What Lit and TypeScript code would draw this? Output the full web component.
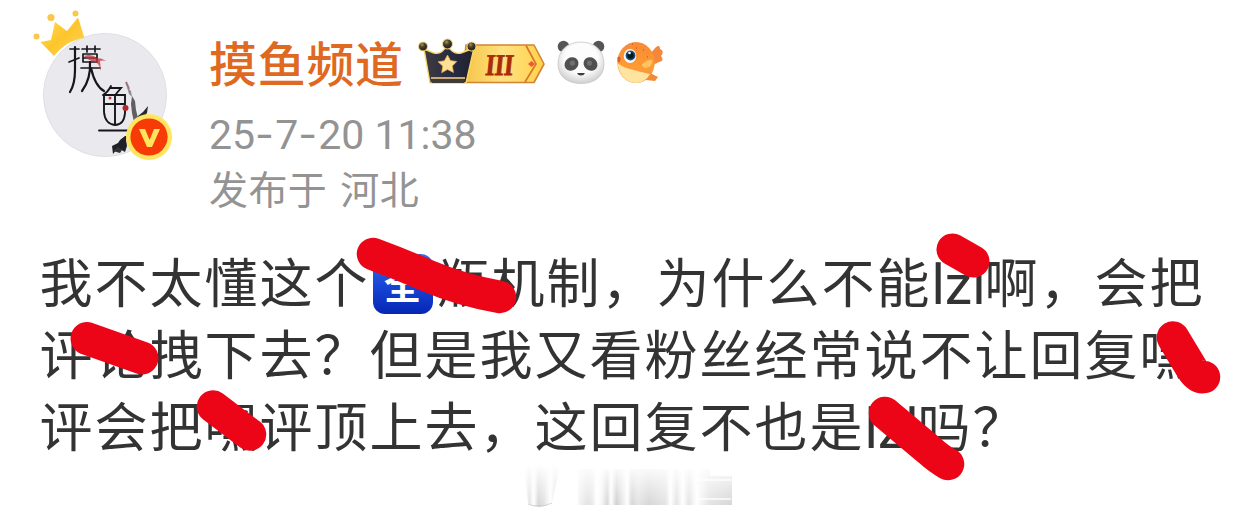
import { LitElement, html, css, svg } from 'lit';
import { customElement } from 'lit/decorators.js';

/**
 * Round author picture with the crown and the verified badge
 */
@customElement('post-avatar')
export class PostAvatar extends LitElement {
  static styles = css`
    :host {
      display: block;
      width: 170px;
      height: 170px;
    }

    svg {
      display: block;
    }
  `;

  render() {
    return html`
      <svg width="170" height="170" viewBox="20 0 170 170">
        <defs>
          <linearGradient id="crown" x1="0" y1="0" x2="1" y2="1">
            <stop offset="0" stop-color="#ffdc55" />
            <stop offset="0.5" stop-color="#fdc52c" />
            <stop offset="1" stop-color="#ffd75c" />
          </linearGradient>
        </defs>
        <circle cx="105" cy="95" r="61.6" fill="#eaeaee" stroke="#dcdce0" stroke-width="0.8" />
        <!-- calligraphy: upper character -->
        <g fill="none" stroke="#17171b" stroke-width="1.7" stroke-linecap="round">
          <path d="M70 49h9M69 62l10-4M82 49h18M87 46v6M95 46v6M83 54v8M97 54v8M83 54h14M83 58h14M83 62h14M81 68h19" />
          <path d="M75 47V70Q75 84 70 92" stroke-width="2.2" />
          <path d="M90 62Q91 79 82 91M91 68Q95 86 104 91" stroke-width="2.2" />
        </g>
        <path d="M84 56q7-3 13 2q5 0 9 3q-4-1-6 0l1 10q-2-8-6-9q-6-1-11-6z" fill="#c3333a" opacity="0.75" />
        <!-- calligraphy: lower character -->
        <g fill="none" stroke="#17171b" stroke-width="1.9" stroke-linecap="round">
          <path d="M111 86Q108 92 103 95M111 88h10L116 94M104 95h21V113Q124 125 115 125Q105 124 104 112ZM105 104h20M115 95v29" />
          <path d="M99 130.5h31" />
        </g>
        <circle cx="110" cy="98" r="1.5" fill="#c8373d" />
        <circle cx="125.5" cy="108" r="3" fill="#b5262c" />
        <!-- ink fish -->
        <path d="M126 82l3 7" stroke="#9f7472" stroke-width="2" />
        <path d="M127 87l4 4 1 6-3-3z" fill="#8d8c91" />
        <path d="M132 96l3 5 1 9 2 8-4 4-2-9-1-9z" fill="#5f5e64" />
        <path d="M138 116l5-4 5-6-1 7-5 6-6 3z" fill="#28282d" />
        <path d="M130 136l-4 3 1 7-2 6-7-4-5 6-1-8 6-3 2-3 5-4z" fill="#202126" />
        <path d="M113 151l5-4 4 3-2 3z" fill="#303138" />
        <!-- crown -->
        <path d="M40.5 42L51 40L55 22L67 31L78 17.5L84.5 38Q67 40 54 56Z" fill="url(#crown)" />
        <circle cx="36.5" cy="36.5" r="3" fill="#fbc64c" />
        <circle cx="51" cy="17.5" r="3.6" fill="#fbc64c" />
        <circle cx="75.5" cy="13.5" r="3" fill="#fbc64c" />
        <!-- verified -->
        <circle cx="149" cy="137" r="23" fill="#ffe661" />
        <circle cx="149" cy="137" r="18.6" fill="#f63b06" />
        <path d="M139 129h6l4.6 11 4.4-11h6l-8 18h-5z" fill="#ffe45e" />
      </svg>
    `;
  }
}

/**
 * Badges that follow the author name
 */
@customElement('name-badges')
export class NameBadges extends LitElement {
  static styles = css`
    :host {
      display: block;
      margin-top: -2px;
    }

    svg {
      display: block;
    }

    .level {
      font-family: 'Liberation Serif', serif;
      font-weight: 700;
      font-size: 30px;
      fill: #a92b08;
      stroke: #a92b08;
      stroke-width: 0.8px;
    }
  `;

  render() {
    return html`
      <svg width="250" height="52" viewBox="416 36 250 52">
        <defs>
          <linearGradient id="gold" x1="0" y1="0" x2="1" y2="0">
            <stop offset="0" stop-color="#f6c343" />
            <stop offset="0.5" stop-color="#ffe181" />
            <stop offset="1" stop-color="#ffd24a" />
          </linearGradient>
          <linearGradient id="cap" x1="0" y1="0" x2="1" y2="0">
            <stop offset="0" stop-color="#413b3e" />
            <stop offset="0.5" stop-color="#292c46" />
            <stop offset="1" stop-color="#20212c" />
          </linearGradient>
          <radialGradient id="bead" cx="0.4" cy="0.3">
            <stop offset="0" stop-color="#aa9664" />
            <stop offset="0.5" stop-color="#51472f" />
            <stop offset="1" stop-color="#2d2922" />
          </radialGradient>
          <radialGradient id="fur" cx="0.5" cy="0.4" r="0.6">
            <stop offset="0.6" stop-color="#fcfcfc" />
            <stop offset="1" stop-color="#cfcfcf" />
          </radialGradient>
          <linearGradient id="fish" x1="0" y1="0" x2="0" y2="1">
            <stop offset="0" stop-color="#f88935" />
            <stop offset="0.6" stop-color="#ff9b32" />
            <stop offset="1" stop-color="#f1943f" />
          </linearGradient>
        </defs>

        <path d="M466 45H534L544 64L534 82.5H462Z" fill="url(#gold)" stroke="#d28434" stroke-width="1.6" stroke-linejoin="round" />
        <path d="M526 45.5L536 64L525 82" fill="none" stroke="#d9762b" stroke-width="1.7" />
        <path d="M528 64l3.5-3 3.5 3-3.5 3z" fill="#f0583a" />
        <text class="level" x="485" y="74.6" textLength="28" lengthAdjust="spacingAndGlyphs" transform="translate(7.5 0) skewX(-6)">III</text>
        <path d="M424 49L434 53Q442 55 447 45Q453 55 461 53L474 48L466 83H430Z" fill="url(#cap)" stroke="#f7d76b" stroke-width="1.4" stroke-linejoin="round" />
        <path d="M430.5 77.5h35l-1.5 5.5h-32z" fill="#403a35" />
        <path d="M431 78h34" stroke="#c6aa79" stroke-width="1.8" />
        <circle cx="423" cy="46.5" r="4.5" fill="url(#bead)" stroke="#f5de89" />
        <circle cx="447.5" cy="44" r="5" fill="url(#bead)" stroke="#f5de89" />
        <circle cx="471.5" cy="46.5" r="4.5" fill="url(#bead)" stroke="#f5de89" />
        <path d="M447.5 55l3 5.6 6.3 .9-4.5 4.500 1.2 6.500-6-3-5.800 3.200 1-6.600-4.700-4.400 6.400-.9z" fill="#ffe193" stroke="#e6ad42" stroke-width="0.7" />

        <!-- panda -->
        <circle cx="563.5" cy="46.5" r="5.8" fill="#555557" />
        <circle cx="598.5" cy="46.5" r="5.8" fill="#555557" />
        <path d="M581 42C595 42 604 51 604 64C604 77 594 83.5 581 83.5S558 77 558 64C558 51 567 42 581 42Z" fill="url(#fur)" stroke="#c9c9c9" stroke-width="0.8" />
        <ellipse cx="571.5" cy="64" rx="7.2" ry="6.5" fill="#505052" transform="rotate(-35 571.5 64)" />
        <ellipse cx="590.5" cy="64" rx="7.2" ry="6.5" fill="#505052" transform="rotate(35 590.5 64)" />
        <circle cx="572.5" cy="63" r="2.6" fill="#707073" />
        <circle cx="589.5" cy="63" r="2.6" fill="#707073" />
        <path d="M577 73h8q-1 2.5-4 2.5t-4-2.5z" fill="#3d3d3e" />

        <!-- goldfish -->
        <path d="M650 54L656 47Q660 44 660 49Q665 51 661 56Q665 61 659 62L651 66Z" fill="#f5873a" />
        <path d="M648 72l10 5-3 4-9-1z" fill="#ef8b39" />
        <ellipse cx="636" cy="62.5" rx="18.7" ry="20.5" fill="url(#fish)" />
        <path d="M617.5 63Q623 68 634 70Q645 73 650 74Q645 83 635 83Q620 81 617.5 63Z" fill="#ffe3a1" />
        <path d="M641 65Q648 58 653 60Q653 67 645 69Z" fill="#ffc45f" stroke="#f49732" stroke-width="0.7" />
        <path d="M636 48h1M643 50h1M647 57h1M632 44h1" stroke="#d45e20" stroke-width="1.5" />
        <ellipse cx="630" cy="56" rx="6.2" ry="7" fill="#f5faff" />
        <circle cx="630.5" cy="55.5" r="4.9" fill="#175079" />
        <circle cx="630.5" cy="55.5" r="3.2" fill="#071923" />
        <circle cx="629.5" cy="53" r="1.3" fill="#fff" />
        <path d="M617.5 57q4-1 3 3t-3 1z" fill="#e05e28" />
      </svg>
    `;
  }
}

const BRUSH_RED = '#eb0516';

// Thick freehand strokes over parts of the text
const strokes = [
  { d: 'M373 254Q400 264 428 276Q461 290 500 297', width: 32.5 },
  { d: 'M952.5 249.5L973.5 261.5', width: 32 },
  { d: 'M87 338.5L142 358', width: 33 },
  { d: 'M1173 337.5L1192 369Q1198 378 1204 377', width: 32.5 },
  { d: 'M213 406.5L250 434.5', width: 32.5 },
  { d: 'M885 413L929 450Q939 459 948 464', width: 32.5 },
];

@customElement('app-root')
export class AppRoot extends LitElement {
  static styles = css`
    :host {
      display: block;
      position: relative;
      box-sizing: border-box;
      width: 1258px;
      height: 520px;
      overflow: hidden;
      background: #fff;
      font-family: 'Noto Sans CJK SC', sans-serif;
    }

    .header {
      display: flex;
      height: 244px;
      padding-left: 20px;
      box-sizing: border-box;
    }

    .meta {
      padding: 35px 0 0 19px;
    }

    .name-row {
      display: flex;
      align-items: center;
      height: 56px;
    }

    .name {
      width: 207px;
      height: 62px;
      font-size: 48px;
      font-weight: 500;
      letter-spacing: 0.7px;
      line-height: 58px;
      color: #df6920;
      white-space: nowrap;
    }

    .time {
      height: 56px;
      margin-top: 15px;
      font-family: Roboto, sans-serif;
      font-size: 41px;
      line-height: 56px;
      color: #939393;
    }

    .dash {
      font-family: Inter, sans-serif;
      letter-spacing: 1.2px;
    }

    .place {
      font-size: 39px;
      line-height: 51px;
      word-spacing: 4px;
      letter-spacing: 0.4px;
      color: #939393;
      white-space: pre;
    }

    .body {
      padding-left: 39.5px;
      font-size: 53px;
      letter-spacing: 2px;
      line-height: 72px;
      color: #333;
    }

    .line {
      display: flex;
      align-items: center;
      height: 72px;
      white-space: nowrap;
    }

    .latin {
      width: 53px;
      padding-top: 9px;
      font-family: Roboto, sans-serif;
      font-size: 55px;
      letter-spacing: 0;
    }

    .tag {
      display: flex;
      align-items: center;
      justify-content: center;
      width: 60px;
      height: 60px;
      margin: 7px 4px 0 3px;
      border-radius: 12px;
      background: linear-gradient(#4169dc, #1748d8 50%, #0626b4);
      color: #fff;
      font-size: 37px;
      font-weight: 700;
      letter-spacing: 0;
      line-height: 60px;
    }

    .overlay {
      position: absolute;
      inset: 0;
    }
  `;

  // Faded strip under the text
  renderWatermark() {
    return svg`
      <defs>
        <linearGradient id="fade" x1="0" y1="0" x2="0" y2="1">
          <stop offset="0" stop-color="#fff" stop-opacity="1" />
          <stop offset="0.3" stop-color="#fff" stop-opacity="0.75" />
          <stop offset="1" stop-color="#fff" stop-opacity="0.2" />
        </linearGradient>
        <linearGradient id="bars" x1="0" y1="0" x2="1" y2="0">
          <stop offset="0" stop-color="#f4f4f4" />
          <stop offset="0.06" stop-color="#ddd" />
          <stop offset="0.09" stop-color="#e2e2e2" />
          <stop offset="0.12" stop-color="#fff" />
          <stop offset="0.15" stop-color="#f7f7f7" />
          <stop offset="0.19" stop-color="#ccc" />
          <stop offset="0.215" stop-color="#fff" />
          <stop offset="0.25" stop-color="#c4c4c4" />
          <stop offset="0.28" stop-color="#ddd" />
          <stop offset="0.32" stop-color="#fff" />
          <stop offset="0.35" stop-color="#ccc" />
          <stop offset="0.39" stop-color="#ddd" />
          <stop offset="0.46" stop-color="#ccc" />
          <stop offset="0.57" stop-color="#ddd" />
          <stop offset="0.6" stop-color="#fff" />
          <stop offset="0.64" stop-color="#ddd" />
          <stop offset="0.68" stop-color="#fff" />
          <stop offset="0.72" stop-color="#ddd" />
          <stop offset="0.77" stop-color="#fff" />
          <stop offset="0.85" stop-color="#ddd" />
          <stop offset="1" stop-color="#ccc" />
        </linearGradient>
        <linearGradient id="cup" x1="0" y1="0" x2="1" y2="0">
          <stop offset="0" stop-color="#fff" />
          <stop offset="0.15" stop-color="#ddd" />
          <stop offset="0.27" stop-color="#fff" />
          <stop offset="0.4" stop-color="#ccc" />
          <stop offset="0.56" stop-color="#ddd" />
          <stop offset="0.73" stop-color="#fff" />
          <stop offset="0.89" stop-color="#ddd" />
          <stop offset="1" stop-color="#fff" />
        </linearGradient>
      </defs>
      <path d="M524 466H560L552 503Q539 510 528 503Z" fill="url(#cup)" />
      <path d="M528 504Q539 509 552 503" fill="none" stroke="#ccc" />
      <path d="M578 469H710V476H732V505H578Z" fill="url(#bars)" />
      <path d="M697 480H731M697 499H731" stroke="#fff" stroke-width="2" opacity="0.7" />
      <rect x="520" y="464" width="216" height="41" fill="url(#fade)" />
    `;
  }

  render() {
    return html`
      <div class="header">
        <post-avatar></post-avatar>
        <div class="meta">
          <div class="name-row">
            <span class="name">摸鱼频道</span>
            <name-badges></name-badges>
          </div>
          <div class="time">25<span class="dash">-</span>7<span class="dash">-</span>20 11:38</div>
          <div class="place">发布于 河北</div>
        </div>
      </div>
      <div class="body" lang="zh-CN">
        <div class="line">
          <span>我不太懂这个</span><span class="tag">全</span><span>瓶机制，为什么不能</span><span class="latin">lzl</span><span>啊，会把</span>
        </div>
        <div class="line"><span>评论拽下去？但是我又看粉丝经常说不让回复嘿</span></div>
        <div class="line">
          <span>评会把嘿评顶上去，这回复不也是</span><span class="latin">lzl</span><span>吗？</span>
        </div>
      </div>
      <svg class="overlay" width="1258" height="520" viewBox="0 0 1258 520">
        ${this.renderWatermark()}
        ${strokes.map(
          (s) => svg`<path d=${s.d} fill="none" stroke=${BRUSH_RED} stroke-width=${s.width} stroke-linecap="round" stroke-linejoin="round" />`
        )}
      </svg>
    `;
  }
}
